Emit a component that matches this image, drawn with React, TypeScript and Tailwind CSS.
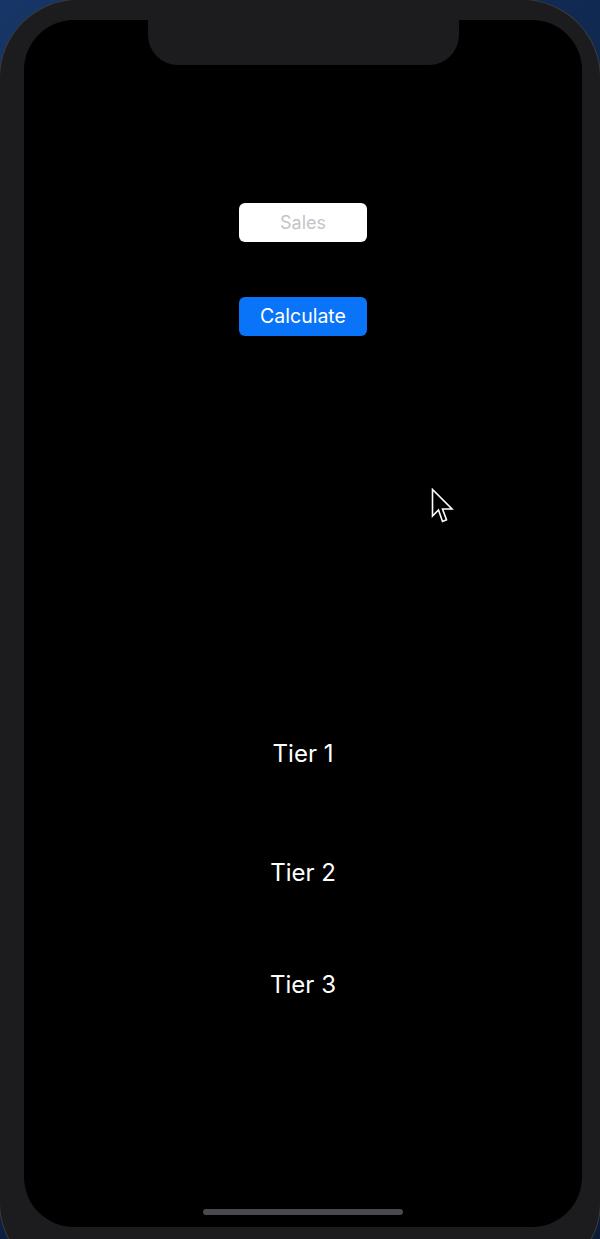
import React from "react";

export default function App() {
  return (
    <div className="w-[600px] h-[1239px] overflow-hidden bg-[linear-gradient(135deg,#173566,#0c2347_50%,#0a1c38)]" style={{ fontFamily: "Inter, 'Open Sans', sans-serif" }}>
      <div className="w-full h-[1280px] rounded-[78px] bg-[#1c1b1e] pt-[20px] pl-[24px] pr-[18px] pb-[53px] ring-1 ring-[#3a3a3e]">
        <div className="relative h-full rounded-[50px] bg-black flex flex-col items-center">
          {/* notch */}
          <div className="absolute top-0 left-[124px] w-[311px] h-[45px] bg-[#1c1b1e] rounded-b-[30px]" />

          <div className="mt-[183px] w-[128px] h-[39px] bg-white rounded-[6px] flex items-center justify-center">
            <span className="text-[18px] text-[#c4c4c7] leading-none">Sales</span>
          </div>

          <button className="mt-[55px] w-[128px] h-[39px] bg-[#0a74f8] rounded-[6px] flex items-center justify-center">
            <span className="text-[19.5px] text-white leading-none">Calculate</span>
          </button>

          <div className="mt-[404px] h-[28px] flex items-center text-[24px] text-white leading-none">Tier 1</div>
          <div className="mt-[91px] h-[28px] flex items-center text-[24px] text-white leading-none">Tier 2</div>
          <div className="mt-[84px] h-[28px] flex items-center text-[24px] text-white leading-none">Tier 3</div>

          {/* cursor */}
          <svg className="absolute left-[407px] top-[468px]" width="24" height="36" viewBox="0 0 24 36">
            <path d="M1.5 1.5 V28 L7.5 22 L11.5 33.5 L15.5 31.8 L11.5 21 H21 Z" fill="black" stroke="white" strokeWidth="1.6" strokeLinejoin="miter" />
          </svg>

          {/* home indicator */}
          <div className="absolute bottom-[12px] left-[179px] w-[200px] h-[6px] rounded-full bg-[#4a494e]" />
        </div>
      </div>
    </div>
  );
}
